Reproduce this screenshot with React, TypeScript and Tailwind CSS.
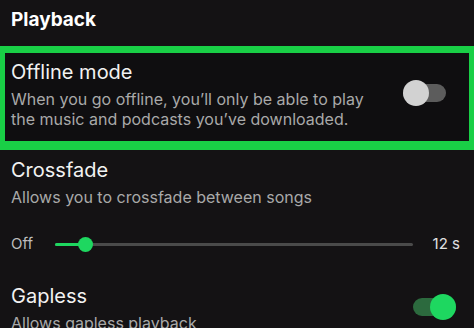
import React from 'react';

function Toggle({ on }: { on: boolean }) {
  return (
    <div className="relative h-[26px] w-[43px] shrink-0">
      <div
        className={
          on
            ? 'absolute left-0 top-[4px] h-[18px] w-[43px] rounded-full bg-[#2c6a3e]'
            : 'absolute left-0 top-[4px] h-[18px] w-[43px] rounded-full bg-[#5c5c5c]'
        }
      />
      <div
        className={
          on
            ? 'absolute right-0 top-0 h-[26px] w-[26px] rounded-full bg-[#1ed760]'
            : 'absolute left-0 top-0 h-[26px] w-[26px] rounded-full bg-[#d2d2d2]'
        }
      />
    </div>
  );
}

export default function App() {
  return (
    <div
      className="h-[328px] w-[474px] overflow-hidden bg-[#141214] text-white"
      style={{ fontFamily: 'Inter, "Noto Sans", sans-serif' }}
    >
      {/* Section header */}
      <div className="h-[46px] px-[11px] pt-[7px]">
        <h2 className="text-[19px] font-bold leading-[26px]">Playback</h2>
      </div>

      {/* Highlighted row */}
      <div className="flex h-[104px] items-start border-x-[5px] border-t-[7px] border-b-[9px] border-[#19cf46] bg-[#0f0e10] pl-[6px] pr-[23px] pt-[6px]">
        <div className="flex-1">
          <div className="text-[20px] leading-[26px] text-[#f2f2f2]">Offline mode</div>
          <div className="mt-[4px] text-[16px] leading-[20px] text-[#a9a9a9]">
            When you go offline, you’ll only be able to play
            <br />
            the music and podcasts you’ve downloaded.
          </div>
        </div>
        <div className="mt-[21px]">
          <Toggle on={false} />
        </div>
      </div>

      {/* Crossfade */}
      <div className="px-[11px] pt-[7px]">
        <div className="text-[20px] leading-[26px] text-[#f2f2f2]">Crossfade</div>
        <div className="mt-[4px] text-[16px] leading-[20px] text-[#a9a9a9]">
          Allows you to crossfade between songs
        </div>
        <div className="mt-[27px] flex h-[20px] items-center">
          <span className="w-[44px] text-[15px] text-[#bdbdbd]">Off</span>
          <div className="relative h-[3px] flex-1 rounded-full bg-[#4a4a4a]">
            <div className="absolute left-0 top-0 h-[3px] w-[30px] rounded-full bg-[#1ed760]" />
            <div className="absolute left-[23px] top-[-6px] h-[15px] w-[15px] rounded-full bg-[#1ed760]" />
          </div>
          <span className="ml-[20px] mr-[3px] text-[15px] text-[#e0e0e0]">12 s</span>
        </div>
      </div>

      {/* Gapless */}
      <div className="mt-[29px] flex items-start px-[11px]">
        <div className="flex-1">
          <div className="text-[20px] leading-[26px] text-[#f2f2f2]">Gapless</div>
          <div className="mt-[4px] text-[16px] leading-[20px] text-[#a9a9a9]">Allows gapless playback</div>
        </div>
        <div className="mr-[7px] mt-[11px]">
          <Toggle on={true} />
        </div>
      </div>
    </div>
  );
}
